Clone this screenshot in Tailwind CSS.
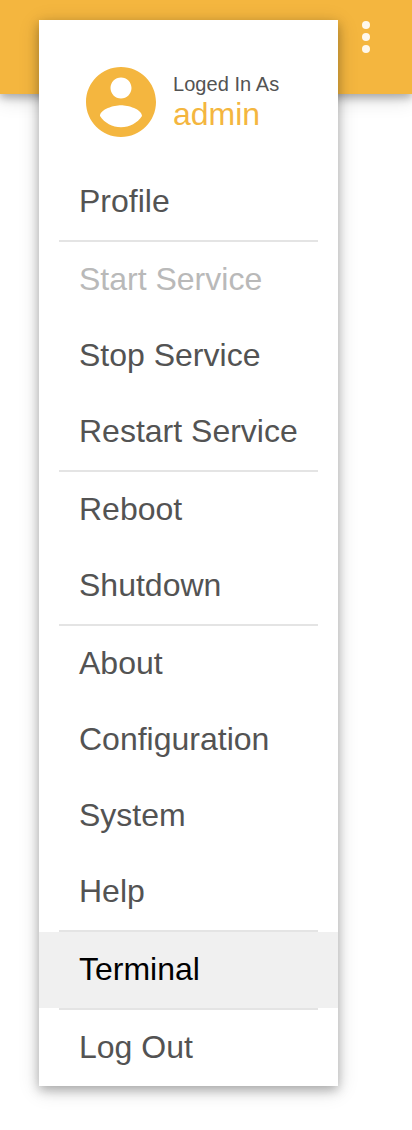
<!DOCTYPE html>
<html lang="en">
<head>
<meta charset="utf-8">
<title>User menu</title>
<script src="https://cdn.jsdelivr.net/npm/@tailwindcss/browser@4"></script>
</head>
<body class="relative h-[1130px] w-[412px] overflow-hidden bg-white font-['Liberation_Sans',Arial,sans-serif] text-[#535353]">
  <header class="flex h-[94px] justify-end bg-[#f4b63f] pt-[13px] pr-[22px] shadow-[0_4px_8px_0_rgba(0,0,0,0.26),0_4px_20px_0_rgba(0,0,0,0.16)]">
    <svg class="size-12" viewBox="0 0 48 48" fill="#fff" fill-opacity=".9"><circle cx="24" cy="12" r="4"/><circle cx="24" cy="24" r="4"/><circle cx="24" cy="36" r="4"/></svg>
  </header>
  <nav class="absolute top-5 left-[39px] w-[299px] bg-white text-[32px] leading-[74px] whitespace-nowrap shadow-[0_4px_10px_0_rgba(0,0,0,0.26),0_4px_20px_0_rgba(0,0,0,0.16)]">
    <div class="flex h-36 pt-10 pl-10">
      <svg class="size-[84px]" viewBox="0 0 24 24" fill="#f4b63f"><path d="M12 2C6.480 2 2 6.480 2 12s4.480 10 10 10 10-4.480 10-10S17.520 2 12 2zm0 3c1.660 0 3 1.340 3 3s-1.340 3-3 3-3-1.340-3-3 1.340-3 3-3zm0 14.200c-2.500 0-4.710-1.280-6-3.220.030-1.990 4-3.080 6-3.080s5.970 1.090 6 3.080c-1.290 1.940-3.500 3.220-6 3.220z"/></svg>
      <div class="pt-3 pl-[10px]">
        <div class="text-xl leading-6 tracking-[0.05px]">Loged In As</div>
        <div class="leading-9 text-[#f4b63f]">admin</div>
      </div>
    </div>
    <div class="h-19 px-10">Profile</div>
    <hr class="mx-5 border-t-2 border-[#e4e4e4]">
    <div class="h-19 px-10 text-[#b9b9b9]">Start Service</div>
    <div class="h-19 px-10">Stop Service</div>
    <div class="h-19 px-10">Restart Service</div>
    <hr class="mx-5 border-t-2 border-[#e4e4e4]">
    <div class="h-19 px-10">Reboot</div>
    <div class="h-19 px-10">Shutdown</div>
    <hr class="mx-5 border-t-2 border-[#e4e4e4]">
    <div class="h-19 px-10">About</div>
    <div class="h-19 px-10">Configuration</div>
    <div class="h-19 px-10">System</div>
    <div class="h-19 px-10">Help</div>
    <hr class="mx-5 border-t-2 border-[#e4e4e4]">
    <div class="h-19 bg-[#f0f0f0] px-10 text-black">Terminal</div>
    <hr class="mx-5 border-t-2 border-[#e4e4e4]">
    <div class="h-19 px-10">Log Out</div>
  </nav>
</body>
</html>
